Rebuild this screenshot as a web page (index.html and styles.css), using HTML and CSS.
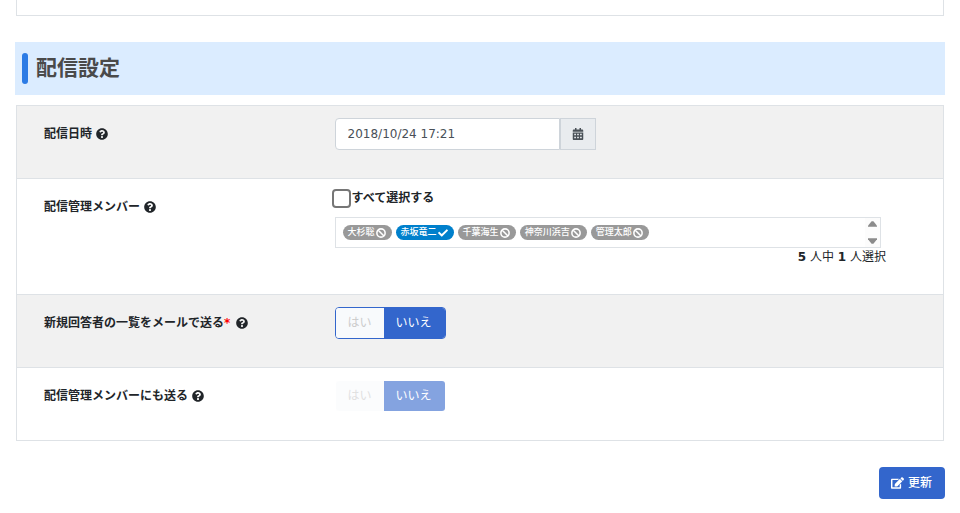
FILE: index.html
```html
<!DOCTYPE html>
<html lang="ja">
<head>
    <meta charset="UTF-8">
    <meta name="viewport" content="width=device-width, initial-scale=1.0">
    <title>配信設定</title>
    <link rel="stylesheet" href="styles.css">
</head>
<body>
    <!-- Shared icons -->
    <svg class="sprite" aria-hidden="true">
        <symbol id="icon-help" viewBox="0 0 512 512">
            <path d="M504 256c0 136.997-111.043 248-248 248S8 392.997 8 256C8 119.083 119.043 8 256 8s248 111.083 248 248zM262.655 90c-54.497 0-89.255 22.957-116.549 63.758-3.536 5.286-2.353 12.415 2.715 16.258l34.699 26.31c5.205 3.947 12.621 3.008 16.665-2.122 17.864-22.658 30.113-35.797 57.303-35.797 20.429 0 45.698 13.148 45.698 32.958 0 14.976-12.363 22.667-32.534 33.976C247.128 238.528 216 254.941 216 296v4c0 6.627 5.373 12 12 12h56c6.627 0 12-5.373 12-12v-1.333c0-28.462 83.186-29.647 83.186-106.667 0-58.002-60.165-102-116.531-102zM256 338c-25.365 0-46 20.635-46 46 0 25.364 20.635 46 46 46s46-20.636 46-46c0-25.365-20.635-46-46-46z"/>
        </symbol>
        <symbol id="icon-ban" viewBox="0 0 512 512">
            <path d="M256 44a212 212 0 1 0 0 424a212 212 0 1 0 0-424zM106 106l300 300" fill="none" stroke="currentColor" stroke-width="80"/>
        </symbol>
        <symbol id="icon-check" viewBox="0 0 512 512">
            <path d="M173.898 439.404l-166.4-166.4c-9.997-9.997-9.997-26.206 0-36.204l36.203-36.204c9.997-9.998 26.207-9.998 36.204 0L192 312.69 432.095 72.596c9.997-9.997 26.207-9.997 36.204 0l36.203 36.204c9.997 9.997 9.997 26.206 0 36.204l-294.4 294.401c-9.998 9.997-26.207 9.997-36.204-.001z"/>
        </symbol>
        <symbol id="icon-calendar" viewBox="0 0 448 512">
            <path fill-rule="evenodd" d="M0 160v-48c0-26 22-48 48-48h48V12c0-7 5-12 12-12h40c7 0 12 5 12 12v52h128V12c0-7 5-12 12-12h40c7 0 12 5 12 12v52h48c26 0 48 22 48 48v48zM0 192h448v272c0 26-22 48-48 48H48c-26 0-48-22-48-48zM64 240v64h72v-64zM188 240v64h72v-64zM312 240v64h72v-64zM64 368v64h72v-64zM188 368v64h72v-64zM312 368v64h72v-64z"/>
        </symbol>
        <symbol id="icon-edit" viewBox="0 0 576 512">
            <path d="M402.6 83.2l90.2 90.2c3.8 3.8 3.8 10 0 13.8L274.4 405.6l-92.8 10.3c-12.4 1.4-22.9-9.1-21.5-21.5l10.3-92.8L388.8 83.2c3.8-3.8 10-3.8 13.8 0zm162-22.9l-48.8-48.8c-15.2-15.2-39.9-15.2-55.2 0l-35.4 35.4c-3.8 3.8-3.8 10 0 13.8l90.2 90.2c3.8 3.8 10 3.8 13.8 0l35.4-35.4c15.2-15.3 15.2-40 0-55.2zM384 346.2V448H64V128h229.8c3.2 0 6.2-1.3 8.5-3.5l40-40c7.6-7.6 2.2-20.5-8.5-20.5H48C21.5 64 0 85.5 0 112v352c0 26.5 21.5 48 48 48h352c26.5 0 48-21.5 48-48V306.2c0-10.7-12.9-16-20.5-8.5l-40 40c-2.2 2.3-3.5 5.3-3.5 8.5z"/>
        </symbol>
        <symbol id="icon-up" viewBox="0 0 10 8">
            <path d="M4 1h2l4 5v1H0V6z"/>
        </symbol>
        <symbol id="icon-down" viewBox="0 0 10 8">
            <path d="M4 7h2l4-5V1H0v1z"/>
        </symbol>
    </svg>

    <div class="previous-section"></div>

    <form class="settings">
        <h2 class="section-title">配信設定</h2>

        <div class="rows">
            <div class="row">
                <div class="row-label">
                    <label for="sendDate">配信日時</label>
                    <svg class="help"><use href="#icon-help"/></svg>
                </div>
                <div class="row-value">
                    <div class="date-group">
                        <input type="text" id="sendDate" value="2018/10/24 17:21">
                        <button type="button" aria-label="カレンダー"><svg><use href="#icon-calendar"/></svg></button>
                    </div>
                </div>
            </div>

            <div class="row row-members">
                <div class="row-label">
                    <span>配信管理メンバー</span>
                    <svg class="help"><use href="#icon-help"/></svg>
                </div>
                <div class="row-value">
                    <div class="select-all">
                        <input type="checkbox" id="selectAll">
                        <label for="selectAll">すべて選択する</label>
                    </div>
                    <div class="members">
                        <div class="member-box">
                            <div class="member-list">
                                <button type="button" class="member">大杉聡<svg><use href="#icon-ban"/></svg></button>
                                <button type="button" class="member selected">赤坂竜二<svg><use href="#icon-check"/></svg></button>
                                <button type="button" class="member">千葉海生<svg><use href="#icon-ban"/></svg></button>
                                <button type="button" class="member">神奈川浜吉<svg><use href="#icon-ban"/></svg></button>
                                <button type="button" class="member">管理太郎<svg><use href="#icon-ban"/></svg></button>
                            </div>
                            <div class="scroller">
                                <button type="button" aria-label="上へ"><svg><use href="#icon-up"/></svg></button>
                                <button type="button" aria-label="下へ"><svg><use href="#icon-down"/></svg></button>
                            </div>
                        </div>
                        <p class="member-count"><b>5</b> 人中 <b>1</b> 人選択</p>
                    </div>
                </div>
            </div>

            <div class="row">
                <div class="row-label">
                    <span>新規回答者の一覧をメールで送る<span class="required">*</span></span>
                    <svg class="help"><use href="#icon-help"/></svg>
                </div>
                <div class="row-value">
                    <div class="toggle">
                        <input type="radio" name="sendList" id="sendListYes">
                        <label for="sendListYes">はい</label>
                        <input type="radio" name="sendList" id="sendListNo" checked>
                        <label for="sendListNo">いいえ</label>
                    </div>
                </div>
            </div>

            <div class="row">
                <div class="row-label">
                    <span>配信管理メンバーにも送る</span>
                    <svg class="help"><use href="#icon-help"/></svg>
                </div>
                <div class="row-value">
                    <div class="toggle disabled">
                        <input type="radio" name="sendMembers" id="sendMembersYes" disabled>
                        <label for="sendMembersYes">はい</label>
                        <input type="radio" name="sendMembers" id="sendMembersNo" checked disabled>
                        <label for="sendMembersNo">いいえ</label>
                    </div>
                </div>
            </div>
        </div>

        <div class="actions">
            <button type="submit" class="update"><svg><use href="#icon-edit"/></svg>更新</button>
        </div>
    </form>
</body>
</html>
```

FILE: styles.css
```css
* {
    box-sizing: border-box;
}
body {
    margin: 0;
    padding: 0 15px;
    background: #fff;
    color: #212529;
    font-family: "DejaVu Sans", "Noto Sans CJK JP", sans-serif;
    font-size: 12px;
    line-height: 18px;
}
button,
input {
    font: inherit;
    color: inherit;
    margin: 0;
}
button {
    cursor: pointer;
}
svg {
    fill: currentColor;
    flex: none;
}
.sprite {
    display: none;
}
.previous-section {
    height: 16px;
    margin: 0 1px;
    border: 1px solid #dee2e6;
    border-top: none;
}

/* Section title */
.section-title {
    display: flex;
    align-items: center;
    gap: 8px;
    margin: 26px 0 10px;
    padding: 11px 7px;
    background: #dbecff;
    color: #4a4a4a;
    font-size: 21px;
    line-height: 31px;
}
.section-title::before {
    content: "";
    width: 6px;
    height: 31px;
    border-radius: 3px;
    background: #2c7be5;
}

/* Rows */
.rows {
    margin: 0 1px;
    border: 1px solid #dee2e6;
}
.row {
    display: flex;
    min-height: 73px;
    border-bottom: 1px solid #dee2e6;
}
.row:last-child {
    min-height: 72px;
    border-bottom: none;
}
.row:nth-child(odd) {
    background: #f1f1f1;
}
.row-members {
    min-height: 116px;
}
.row-label {
    display: flex;
    align-items: center;
    align-self: flex-start;
    gap: 4px;
    width: 33%;
    padding: 19px 0 0 27px;
    font-weight: 600;
}
.row-value {
    flex: 1;
    padding: 12px;
}
.help {
    width: 12px;
    height: 12px;
}
.required {
    margin-right: 2px;
    color: #f00;
}

/* Date */
.date-group {
    display: flex;
    width: 261px;
    height: 32px;
}
.date-group input {
    flex: 1;
    min-width: 0;
    padding: 0 12px;
    border: 1px solid #ced4da;
    border-radius: 4px 0 0 4px;
    background: #fff;
    color: #495057;
}
.date-group button {
    display: flex;
    align-items: center;
    justify-content: center;
    width: 36px;
    padding: 0;
    border: 1px solid #ced4da;
    background: #e9ecef;
    color: #495057;
}
.date-group svg {
    width: 12px;
    height: 12px;
}

/* Members */
.row-members .row-value {
    padding-top: 9px;
}
.select-all {
    display: flex;
    align-items: center;
    height: 20px;
    margin-left: -3px;
    font-weight: 600;
}
.select-all input {
    appearance: none;
    width: 19px;
    height: 19px;
    margin-right: 1px;
    border: 2px solid #767676;
    border-radius: 4px;
    background: #fff;
}
.select-all input:checked {
    background: #3366cc;
}
.members {
    margin: 9px 45px 0 0;
}
.member-box {
    display: flex;
    height: 31px;
    margin-right: 5px;
    border: 1px solid #dee2e6;
}
.member-list {
    display: flex;
    flex: 1;
    flex-wrap: wrap;
    gap: 4px;
    padding: 7px;
    overflow: hidden;
}
.member {
    display: flex;
    align-items: center;
    gap: 1px;
    height: 15px;
    padding: 0 6px 0 5px;
    border: none;
    border-radius: 8px;
    background: #999;
    color: #fff;
    font-size: 9px;
    font-weight: 500;
    line-height: 15px;
}
.member.selected {
    background: #0080cc;
}
.member svg {
    width: 10px;
    height: 10px;
}
.scroller {
    display: flex;
    flex-direction: column;
    justify-content: space-between;
    width: 15px;
    padding: 2px 0;
    background: #fcfcfc;
    color: #8b8b8b;
}
.scroller button {
    display: flex;
    justify-content: center;
    padding: 0;
    border: none;
    background: none;
}
.scroller svg {
    width: 9px;
    height: 8px;
}
.member-count {
    margin: 0;
    text-align: right;
}

/* Yes / no toggle */
.toggle {
    display: flex;
    width: fit-content;
    height: 32px;
    border: 1px solid #3366cc;
    border-radius: 4px;
    overflow: hidden;
}
.toggle input {
    appearance: none;
    width: 0;
    height: 0;
}
.toggle label {
    padding: 0 12px;
    background: #f8fafc;
    color: #ccc;
    line-height: 30px;
    cursor: pointer;
}
.toggle input:checked + label {
    padding-right: 13px;
    background: #3366cc;
    color: #fff;
}
.toggle.disabled {
    border-color: transparent;
}
.toggle.disabled label {
    opacity: 0.6;
    cursor: default;
}

/* Actions */
.actions {
    display: flex;
    justify-content: flex-end;
    padding: 26px 0 14px;
}
.update {
    display: flex;
    align-items: center;
    gap: 4px;
    height: 32px;
    padding: 0 13px 0 12px;
    border: none;
    border-radius: 4px;
    background: #3366cc;
    color: #fff;
    font-weight: 500;
}
.update svg {
    width: 13px;
    height: 12px;
}
```
